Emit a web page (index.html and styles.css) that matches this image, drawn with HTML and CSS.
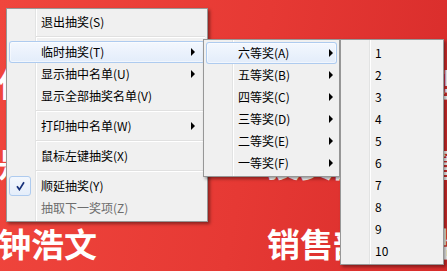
FILE: index.html
```html
<!DOCTYPE html>
<html lang="zh-CN">
<head>
  <meta charset="UTF-8">
  <title>抽奖菜单</title>
  <link rel="stylesheet" href="styles.css">
</head>
<body>
  <div class="screen">
    <div class="wall">
      <span>何丽册</span><span>财务部门经理</span>
      <span>是文杰</span><span>投资部门主管</span>
      <span>钟浩文</span><span>销售部门总监</span>
    </div>

    <div class="menu menu-main">
      <div class="item"><span class="ico"></span><span class="label">退出抽奖(S)</span></div>
      <div class="sep"></div>
      <div class="item hot"><span class="ico"></span><span class="label">临时抽奖(T)</span><span class="arrow"></span></div>
      <div class="item"><span class="ico"></span><span class="label">显示抽中名单(U)</span><span class="arrow"></span></div>
      <div class="item"><span class="ico"></span><span class="label">显示全部抽奖名单(V)</span></div>
      <div class="sep"></div>
      <div class="item"><span class="ico"></span><span class="label">打印抽中名单(W)</span><span class="arrow"></span></div>
      <div class="sep"></div>
      <div class="item"><span class="ico"></span><span class="label">鼠标左键抽奖(X)</span></div>
      <div class="sep"></div>
      <div class="item">
        <span class="ico on">
          <svg width="9" height="10" viewBox="0 0 9 10"><path d="M1 5.2 L3.4 8.6 L8 1.2" fill="none" stroke="#15307a" stroke-width="1.7"/></svg>
        </span>
        <span class="label">顺延抽奖(Y)</span>
      </div>
      <div class="item disabled"><span class="ico"></span><span class="label">抽取下一奖项(Z)</span></div>
    </div>

    <div class="menu menu-prize">
      <div class="item hot"><span class="ico"></span><span class="label">六等奖(A)</span><span class="arrow"></span></div>
      <div class="item"><span class="ico"></span><span class="label">五等奖(B)</span><span class="arrow"></span></div>
      <div class="item"><span class="ico"></span><span class="label">四等奖(C)</span><span class="arrow"></span></div>
      <div class="item"><span class="ico"></span><span class="label">三等奖(D)</span><span class="arrow"></span></div>
      <div class="item"><span class="ico"></span><span class="label">二等奖(E)</span><span class="arrow"></span></div>
      <div class="item"><span class="ico"></span><span class="label">一等奖(F)</span><span class="arrow"></span></div>
    </div>

    <div class="menu menu-count">
      <div class="item"><span class="ico"></span><span class="label">1</span></div>
      <div class="item"><span class="ico"></span><span class="label">2</span></div>
      <div class="item"><span class="ico"></span><span class="label">3</span></div>
      <div class="item"><span class="ico"></span><span class="label">4</span></div>
      <div class="item"><span class="ico"></span><span class="label">5</span></div>
      <div class="item"><span class="ico"></span><span class="label">6</span></div>
      <div class="item"><span class="ico"></span><span class="label">7</span></div>
      <div class="item"><span class="ico"></span><span class="label">8</span></div>
      <div class="item"><span class="ico"></span><span class="label">9</span></div>
      <div class="item"><span class="ico"></span><span class="label">10</span></div>
    </div>
  </div>
</body>
</html>
```

FILE: styles.css
```css
body {
  margin: 0;
}
.screen {
  position: relative;
  width: 447px;
  height: 271px;
  overflow: hidden;
  background: linear-gradient(100deg, #f0463d 0%, #e63934 55%, #d82c2b 100%);
  font-family: "Noto Sans CJK SC", sans-serif;
}
.wall {
  display: grid;
  grid-template-columns: 269px 269px;
  grid-auto-rows: 36px;
  row-gap: 44px;
  padding-top: 65px;
  margin-left: -2px;
  color: #fff;
  font-size: 33px;
  font-weight: 700;
  line-height: 36px;
  white-space: nowrap;
}
.menu {
  position: absolute;
  box-sizing: border-box;
  padding: 2px;
  border: 1px solid #979797;
  background:
    linear-gradient(to right, transparent 28px, #e2e3e3 28px, #e2e3e3 29px, #fff 29px, #fff 30px, transparent 30px),
    #f0f0f0;
  box-shadow: 2px 2px 3px rgba(0,0,0,0.4);
  font-size: 12px;
  color: #000;
}
.menu-main {
  left: 6px;
  top: 8px;
  width: 202px;
}
.menu-prize {
  left: 203px;
  top: 39px;
  width: 137px;
}
.menu-count {
  left: 340px;
  top: 39px;
  width: 104px;
}
.item {
  display: flex;
  align-items: center;
  height: 22px;
  line-height: 22px;
  white-space: nowrap;
}
.menu-main .item {
  padding-right: 10px;
}
.menu-prize .item {
  padding-right: 4px;
}
.item.hot {
  background: linear-gradient(#f4f8fe, #e2ecfa);
  border-radius: 3px;
  box-shadow: inset 0 0 0 1px #aecbef, inset 0 0 0 2px rgba(255,255,255,0.5);
}
.item.disabled {
  color: #6d6d6d;
}
.ico {
  flex: none;
  width: 22px;
  height: 20px;
  margin-right: 10px;
  box-sizing: border-box;
  display: flex;
  align-items: center;
  justify-content: center;
}
.ico.on {
  border: 1px solid #aecbef;
  border-radius: 3px;
  background: linear-gradient(#f3f7fd, #e4edfa);
}
.label {
  flex: 1;
}
.arrow {
  width: 0;
  height: 0;
  border-left: 4px solid #000;
  border-top: 4px solid transparent;
  border-bottom: 4px solid transparent;
}
.sep {
  display: flex;
  align-items: center;
  height: 8px;
  padding-left: 27px;
}
.sep::after {
  content: "";
  flex: 1;
  height: 1px;
  background: #e0e0e0;
  border-bottom: 1px solid #fff;
}
```
